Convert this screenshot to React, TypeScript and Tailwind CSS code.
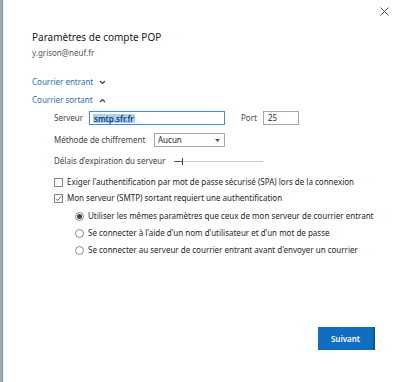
import React from "react";

function CloseIcon() {
  return (
    <svg width="9" height="9" viewBox="0 0 9 9" className="text-[#555]">
      <path d="M0.5 0.5 L8.5 8.5 M8.5 0.5 L0.5 8.5" stroke="currentColor" strokeWidth="1" />
    </svg>
  );
}

function Chevron({ up }: { up?: boolean }) {
  return (
    <svg width="7" height="5" viewBox="0 0 7 5" className="text-[#444]">
      <path d={up ? "M1 4 L3.5 1.5 L6 4" : "M1 1 L3.5 3.5 L6 1"} stroke="currentColor" strokeWidth="1.2" fill="none" />
    </svg>
  );
}

function Checkbox({ checked }: { checked?: boolean }) {
  return (
    <span className="flex h-[9px] w-[9px] shrink-0 items-center justify-center border border-[#8a8a8a] bg-white">
      {checked && (
        <svg width="7" height="7" viewBox="0 0 7 7">
          <path d="M0.8 3.6 L2.7 5.5 L6.3 1.2" stroke="#555" strokeWidth="0.9" fill="none" />
        </svg>
      )}
    </span>
  );
}

function Radio({ checked }: { checked?: boolean }) {
  return (
    <span className="flex h-[9px] w-[9px] shrink-0 items-center justify-center rounded-full border border-[#8a8a8a] bg-white">
      {checked && <span className="h-[5px] w-[5px] rounded-full bg-[#444]" />}
    </span>
  );
}

const radios = [
  { label: "Utiliser les mêmes paramètres que ceux de mon serveur de courrier entrant", checked: true },
  { label: "Se connecter à l'aide d'un nom d'utilisateur et d'un mot de passe", checked: false },
  { label: "Se connecter au serveur de courrier entrant avant d'envoyer un courrier", checked: false },
];

export default function App() {
  return (
    <div
      className="relative h-[382px] w-[400px] overflow-hidden whitespace-nowrap border-l-2 border-[#a7a7a7] bg-white text-[8px] text-[#262626]"
      style={{ fontFamily: '"Noto Sans", "Segoe UI", sans-serif' }}
    >
      <div className="absolute inset-y-0 left-0 w-px bg-[#5b9bd8]" />

      {/* close button */}
      <div className="flex h-[22px] items-center justify-end pr-[11px]">
        <CloseIcon />
      </div>

      <div className="pl-[30px]">
        <h1 className="mt-[7px] text-[10px] leading-[16px] text-[#222]">Paramètres de compte POP</h1>
        <div className="mt-[2px] text-[8px] leading-[12px] text-[#555]">y.grison@neuf.fr</div>

        <div className="mt-[16px] flex h-[14px] items-center gap-[6px] text-[8px] text-[#2e6eb4]">
          Courrier entrant <Chevron />
        </div>
        <div className="mt-[4px] flex h-[14px] items-center gap-[6px] text-[8px] text-[#2e6eb4]">
          Courrier sortant <Chevron up />
        </div>

        <div className="pl-[22px]">
          {/* Serveur / Port */}
          <div className="mt-[4px] flex h-[14px] items-center">
            <span className="w-[35px] shrink-0 text-[#444]">Serveur</span>
            <div className="flex h-[14px] w-[136px] items-center border border-[#3d8ee0] px-[3px]">
              <span className="bg-[#a9d1f3] px-px leading-[9px] font-semibold text-[#1d3f6e]">smtp.sfr.fr</span>
            </div>
            <span className="ml-[16px] w-[22px] shrink-0 text-[#444]">Port</span>
            <div className="flex h-[14px] w-[36px] items-center border border-[#a5a5a5] px-[4px]">25</div>
          </div>

          {/* Méthode de chiffrement */}
          <div className="mt-[8px] flex h-[14px] items-center">
            <span className="w-[100px] shrink-0 text-[#444]">Méthode de chiffrement</span>
            <div className="flex h-[14px] w-[71px] items-center justify-between border border-[#a5a5a5] pl-[3px] pr-[4px]">
              <span>Aucun</span>
              <svg width="5" height="3" viewBox="0 0 5 3">
                <path d="M0 0 L5 0 L2.5 3 Z" fill="#555" />
              </svg>
            </div>
          </div>

          {/* Délais */}
          <div className="mt-[8px] flex h-[12px] items-center">
            <span className="w-[120px] shrink-0 text-[#444]">Délais d'expiration du serveur</span>
            <div className="flex w-[89px] items-center">
              <div className="h-px w-[8px] bg-[#555]" />
              <div className="h-[7px] w-px bg-[#444]" />
              <div className="h-px flex-1 bg-[#c8c8c8]" />
            </div>
          </div>

          <div className="mt-[9px] flex h-[12px] items-center gap-[4px]">
            <Checkbox />
            <span>Exiger l'authentification par mot de passe sécurisé (SPA) lors de la connexion</span>
          </div>
          <div className="mt-[4px] flex h-[12px] items-center gap-[4px]">
            <Checkbox checked />
            <span>Mon serveur (SMTP) sortant requiert une authentification</span>
          </div>

          <div className="pl-[21px]">
            {radios.map((r, i) => (
              <div key={i} className={`flex h-[12px] items-center gap-[4px] ${i === 0 ? "mt-[6px]" : "mt-[5px]"}`}>
                <Radio checked={r.checked} />
                <span>{r.label}</span>
              </div>
            ))}
          </div>
        </div>
      </div>

      <div className="mt-[71px] flex justify-end pr-[25px]">
        <button className="h-[23px] w-[57px] border-r-2 border-[#0a56a0] bg-[#106ebe] text-[8px] font-semibold text-white">
          Suivant
        </button>
      </div>
    </div>
  );
}
